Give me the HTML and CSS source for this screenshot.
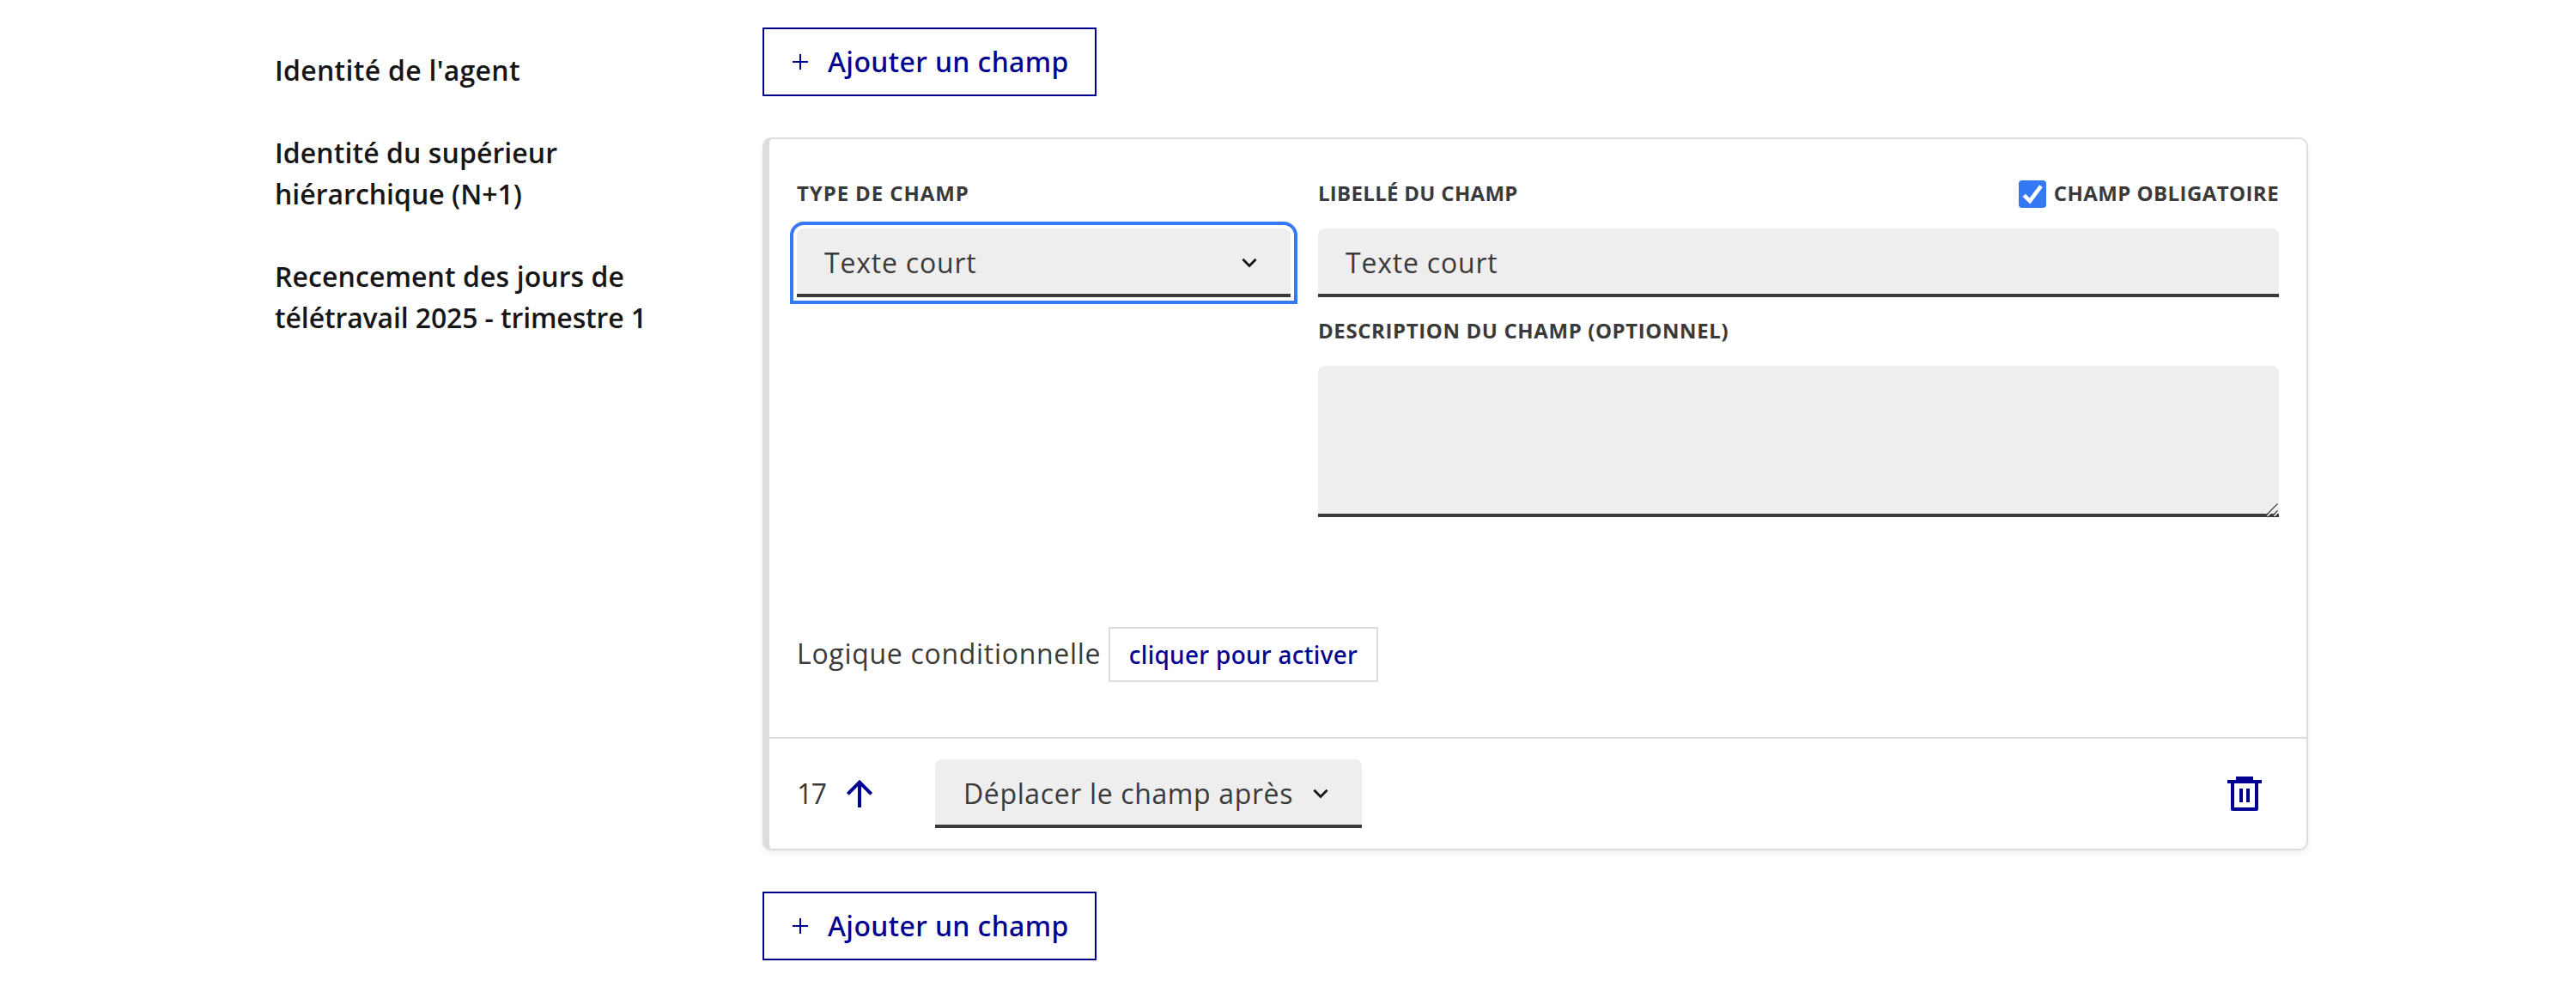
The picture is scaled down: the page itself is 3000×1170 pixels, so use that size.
FILE: index.html
```html
<!DOCTYPE html>
<html lang="fr">
<head>
<meta charset="utf-8">
<title>Éditeur de champs</title>
<link rel="stylesheet" href="styles.css">
</head>
<body>
<div class="page">
  <nav class="summary">
    <a class="summary-link"><span class="t agent">Identité de l'agent</span></a>
    <a class="summary-link"><span class="t superieur">Identité du supérieur</span><br><span class="t hierarchique">hiérarchique (N+1)</span></a>
    <a class="summary-link"><span class="t recensement">Recencement des jours de</span><br><span class="t teletravail">télétravail 2025 - trimestre 1</span></a>
  </nav>
  <main class="editor">
    <button class="add-button" type="button">
      <svg class="plus" viewBox="0 0 18 18"><path d="M9 0v18M0 9h18"/></svg>
      <span class="t add-text">Ajouter un champ</span>
    </button>
    <section class="card">
      <div class="card-body">
        <div class="fields">
          <div class="column">
            <div class="label-row"><label class="label"><span class="t type">Type de champ</span></label></div>
            <div class="control select focused">
              <span class="t court">Texte court</span>
              <svg class="chevron" viewBox="0 0 18 12"><path d="M1.400 1.800 9 9.400l7.600-7.600"/></svg>
            </div>
          </div>
          <div class="column">
            <div class="label-row">
              <label class="label"><span class="t libelle">Libellé du champ</span></label>
              <label class="label mandatory">
                <svg class="checkbox" viewBox="0 0 32 32"><rect width="32" height="32" rx="4"/><path d="M6.200 17.400 13 24 26 6.600"/></svg>
                <span class="t obligatoire">Champ obligatoire</span>
              </label>
            </div>
            <div class="control"><span class="t court">Texte court</span></div>
            <div class="label-row description"><label class="label"><span class="t optionnel">Description du champ (optionnel)</span></label></div>
            <div class="control area">
              <svg class="grip" viewBox="0 0 16 16"><path class="light" d="M2.500 16 16 2.500M10.500 16 16 10.500"/><path d="M1 15 14.500 1.500M9 15l5.500-5.500"/></svg>
            </div>
          </div>
        </div>
        <div class="logic">
          <span class="t logique">Logique conditionnelle</span>
          <button class="activate" type="button"><span class="t activer">cliquer pour activer</span></button>
        </div>
      </div>
      <footer class="card-footer">
        <span class="position"><span class="t number">17</span></span>
        <svg class="arrow" viewBox="0 0 32 32"><path d="M16 32V3M2.300 16.300 16 2.600l13.700 13.700"/></svg>
        <div class="control select move">
          <span class="t deplacer">Déplacer le champ après</span>
          <svg class="chevron" viewBox="0 0 18 12"><path d="M1.400 1.800 9 9.400l7.600-7.600"/></svg>
        </div>
        <svg class="trash" viewBox="0 0 40 40"><path fill-rule="evenodd" d="M10 0h20v4h10v4h-4v30a2 2 0 0 1-2 2H6a2 2 0 0 1-2-2V8H0V4h10zM8 8v28h24V8zm6 6h4v16h-4zm8 0h4v16h-4z"/></svg>
      </footer>
    </section>
    <button class="add-button" type="button">
      <svg class="plus" viewBox="0 0 18 18"><path d="M9 0v18M0 9h18"/></svg>
      <span class="t add-text">Ajouter un champ</span>
    </button>
  </main>
</div>
</body>
</html>
```
FILE: styles.css
```css
* { box-sizing: border-box; }

body {
  margin: 0;
  background: #fff;
  color: #3a3a3a;
  font: 400 32px/48px "Open Sans", "Noto Sans", sans-serif;
}

svg { display: block; flex: none; }

/* Letter spacing, tuned text by text */
.t { white-space: nowrap; }
.agent { letter-spacing: 0.28px; }
.superieur { letter-spacing: 0.07px; }
.hierarchique { letter-spacing: 0; }
.recensement { letter-spacing: 0.08px; }
.teletravail { letter-spacing: -0.13px; }
.add-text { letter-spacing: 0.4px; }
.type { letter-spacing: 0.9px; }
.libelle { letter-spacing: 0.3px; }
.obligatoire { letter-spacing: 0.42px; }
.optionnel { letter-spacing: 0.6px; }
.court { letter-spacing: 0.8px; }
.logique { letter-spacing: 0.7px; }
.activer { letter-spacing: 0.28px; }
.number { letter-spacing: -1.6px; }
.deplacer { letter-spacing: 0.63px; }

.page {
  display: flex;
  height: 1170px;
  padding: 32px 312px 0 320px;
}

.summary {
  display: flex;
  flex-direction: column;
  flex: none;
  gap: 48px;
  width: 568px;
  padding-top: 26px;
  color: #161616;
  font-weight: 600;
}

.editor {
  display: flex;
  flex-direction: column;
  align-items: flex-start;
  flex: 1;
  gap: 48px;
}

.add-button {
  display: flex;
  align-items: center;
  gap: 23px;
  width: 389px;
  height: 80px;
  padding: 0 0 0 33px;
  border: 2px solid #000091;
  background: #fff;
  color: #000091;
  font: 500 32px/48px "Noto Sans", sans-serif;
}

.plus { width: 18px; height: 18px; }
.plus path { stroke: #000091; stroke-width: 2; }

.card {
  width: 100%;
  border: 2px solid #ddd;
  border-left-width: 8px;
  border-radius: 10px;
  box-shadow: 0 3px 6px rgba(0, 0, 0, 0.07);
}

.card-body {
  display: flex;
  flex-direction: column;
  justify-content: space-between;
  height: 698px;
  padding: 38px 32px 64px;
  border-bottom: 2px solid #ddd;
}

.fields {
  display: grid;
  grid-template-columns: 575px 1fr;
  gap: 32px;
}

.label-row {
  display: flex;
  justify-content: space-between;
  height: 50px;
  margin-bottom: 16px;
}

.label-row.description { margin-top: 14px; }

.label {
  font-size: 24px;
  font-weight: 700;
  line-height: 50px;
  text-transform: uppercase;
}

.mandatory {
  display: flex;
  align-items: center;
  gap: 9px;
}

.checkbox { width: 32px; height: 32px; margin-top: 2px; }
.checkbox rect { fill: #3478f6; }
.checkbox path { fill: none; stroke: #fff; stroke-width: 4.6; }

.control {
  display: flex;
  align-items: center;
  height: 80px;
  padding: 4px 32px 0;
  border-bottom: 4px solid #3a3a3a;
  border-radius: 8px 8px 0 0;
  background: #eee;
}

.select { justify-content: space-between; padding-right: 39px; }

.focused {
  outline: 4px solid #3478f6;
  outline-offset: 4px;
}

.chevron { width: 18px; height: 12px; }
.chevron path { fill: none; stroke: #161616; stroke-width: 2.8; }

.area {
  align-items: flex-end;
  justify-content: flex-end;
  height: 176px;
  padding: 0;
}

.grip { width: 16px; height: 16px; margin-bottom: -3px; }
.grip path { fill: none; stroke: #555; stroke-width: 1.5; }
.grip .light { stroke: #fff; }

.logic {
  display: flex;
  align-items: center;
  justify-content: space-between;
  width: 677px;
  height: 64px;
}

.logique { padding-bottom: 2px; }

.activate {
  width: 314px;
  height: 64px;
  padding: 0;
  border: 2px solid #ddd;
  background: #fff;
  color: #000091;
  font: 500 28px/58px "Noto Sans", sans-serif;
}

.card-footer {
  display: flex;
  align-items: center;
  height: 128px;
  padding: 0 52px 0 32px;
}

.position { width: 57px; }

.arrow { width: 32px; height: 32px; }
.arrow path { fill: none; stroke: #000091; stroke-width: 4; }

.move { width: 497px; margin-left: 72px; padding-left: 33px; }

.trash { width: 40px; height: 40px; margin-left: auto; }
.trash path { fill: #000091; }
```
